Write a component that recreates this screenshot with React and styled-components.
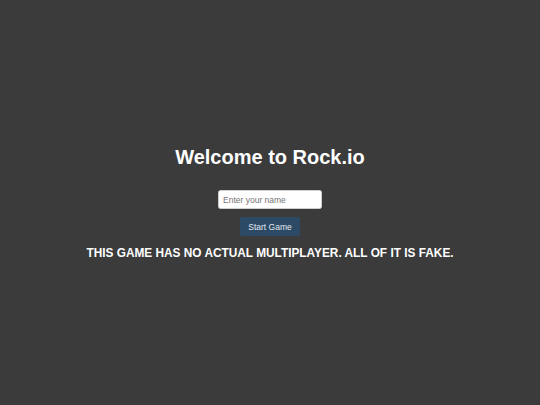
import styled, { createGlobalStyle } from "styled-components"

const Global = createGlobalStyle`
    html, body {
        margin: 0;
        padding: 0;
        background: #3b3b3b;
    }
    body {
        font-family: "Liberation Sans", Arial, sans-serif;
    }
`;

const Page = styled.main`
    display: flex;
    flex-direction: column;
    align-items: center;
    justify-content: center;
    min-height: 100vh;
    padding-top: 2px;
    box-sizing: border-box;
    color: #ffffff;
`;

const Title = styled.h1`
    margin: 0 0 21px;
    font-size: 20px;
    font-weight: bold;
    line-height: 23px;
`;

const NameInput = styled.input`
    box-sizing: border-box;
    width: 104px;
    height: 18.5px;
    padding: 0 4px;
    border: 1px solid #cfcfcf;
    border-radius: 2.5px;
    background: #ffffff;
    font-family: "Liberation Sans", Arial, sans-serif;
    font-size: 8.5px;
    color: #222;
    outline: none;

    ::placeholder {
        color: #757575;
    }
`;

const StartButton = styled.button`
    box-sizing: border-box;
    margin-top: 8.5px;
    width: 60px;
    height: 19px;
    padding: 0;
    border: none;
    border-radius: 2px;
    background: #2c4a66;
    color: #e4e8ec;
    font-family: "Liberation Sans", Arial, sans-serif;
    font-size: 8.5px;
    cursor: pointer;

    :hover {
        background: #345777;
    }
`;

const Warning = styled.h3`
    margin: 11px 0 0;
    font-size: 11.85px;
    font-weight: bold;
    line-height: 13.4px;
`;

const App = () => {
    return (
        <>
            <Global />
            <Page>
                <Title>Welcome to Rock.io</Title>
                <NameInput type="text" placeholder="Enter your name" />
                <StartButton>Start Game</StartButton>
                <Warning>THIS GAME HAS NO ACTUAL MULTIPLAYER. ALL OF IT IS FAKE.</Warning>
            </Page>
        </>
    )
}

export default App;
